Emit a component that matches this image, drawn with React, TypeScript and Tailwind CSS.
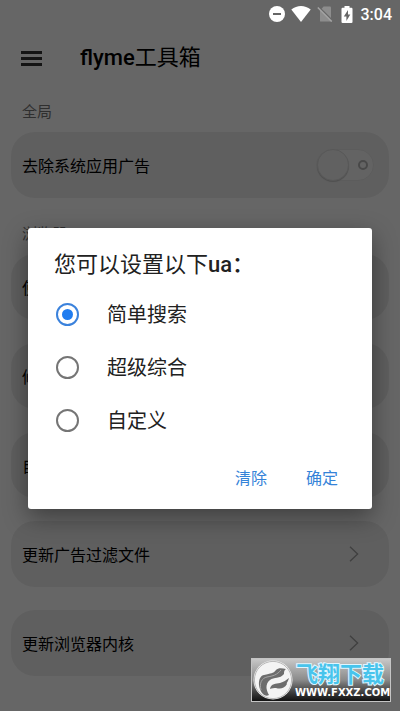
import React, { useState } from "react";

const options = ["简单搜索", "超级综合", "自定义"];

function StatusBar() {
  return (
    <div className="relative z-20 flex h-7 items-center justify-end pr-2 text-white">
      <svg className="size-4" viewBox="0 0 16 16" aria-hidden="true">
        <circle cx="8" cy="8" r="8" fill="#fff" />
        <rect x="4" y="7" width="8" height="2" fill="#666" />
      </svg>
      <svg className="ml-1.5 h-4 w-5" viewBox="0 0 20 16" aria-hidden="true">
        <path d="M10 16 L0.3 3.6 C3.2 1.2 6.5 0 10 0 C13.5 0 16.8 1.2 19.7 3.6 Z" fill="#fff" />
      </svg>
      <svg className="ml-1.5 h-4 w-4" viewBox="0 0 16 16" aria-hidden="true">
        <path d="M3 4.6 L6.6 0.5 H13 Q14 0.5 14 1.5 V15 Q14 15.5 13.4 15.5 H3.6 Q3 15.5 3 15 Z" fill="#8d8d8d" />
        <path d="M2 1.4 L16 15.4" stroke="#666" strokeWidth="2" />
        <path d="M0.8 1.6 L14.8 15.6" stroke="#a4a4a4" strokeWidth="1.4" />
      </svg>
      <svg className="ml-2 h-[17px] w-3" viewBox="0 0 12 17" aria-hidden="true">
        <path d="M3.5 0 H8.5 V1.8 H10.4 Q11.5 1.8 11.5 2.9 V16 Q11.5 17 10.4 17 H1.6 Q0.5 17 0.5 16 V2.9 Q0.5 1.8 1.6 1.8 H3.5 Z" fill="#fff" />
        <path d="M7 4 L2.8 10.4 H5.4 V15 L9.3 8.6 H7 Z" fill="#666" />
      </svg>
      <time className="ml-2 pt-px text-base leading-5 font-medium">3:04</time>
    </div>
  );
}

function Row({ label }: { label: string }) {
  return (
    <button
      type="button"
      className="flex h-[66px] w-full items-center justify-between rounded-3xl bg-[#eee] pr-[30px] pl-[11px] text-left text-base text-black"
    >
      <span className="pt-1">{label}</span>
      <svg className="h-4 w-[10px]" viewBox="0 0 10 16" fill="none" aria-hidden="true">
        <path d="M1 0.7 L8.6 8 L1 15.3" stroke="#a0a0a0" strokeWidth="1.4" />
      </svg>
    </button>
  );
}

function Watermark() {
  return (
    <div className="absolute right-[9px] bottom-[9px] z-40 flex h-11 w-[140px] items-center gap-[2px] border border-[#c4c4c4] bg-linear-to-b from-[#c8c8c8] via-[#8a8a8a] to-[#111] pl-px">
      <svg className="size-10 shrink-0" viewBox="0 0 40 40" aria-hidden="true">
        <circle cx="20" cy="20" r="19.5" fill="#f4f4f4" />
        <circle cx="20" cy="20" r="18.6" fill="none" stroke="#a8a8a8" strokeWidth="0.8" />
        <path d="M10 34 C4 27 5 16 11 15 C18 13 20 14 23 10 C25 8 28 8 33 9 C31 10 31 12 31 14 C27 19 21 17 17 20 C12 24 13 30 16 35 C14 36 12 36 10 34 Z" fill="#6d6d6d" />
        <path d="M17 29 C18 23 23 24 27 23 C31 22 33 20 36 18 C35 22 33 23 34 24 C31 29 27 29 23 28 C21 28 19 28 17 29 Z" fill="#6d6d6d" />
        <path d="M8 30 C6 23 9 18 14 17 C20 16 24 15 28 10" stroke="#a5a5a5" strokeWidth="1" fill="none" />
      </svg>
      <div className="flex flex-col whitespace-nowrap">
        <span className="pl-px text-[22px] leading-[25px] font-bold text-[#48c4ec] [-webkit-text-stroke:2px_#dff6ff] [paint-order:stroke_fill]">飞翔下载</span>
        <span className="font-['DejaVu_Sans',sans-serif] text-[10px] leading-3 font-bold text-white">WWW.FXXZ.COM</span>
      </div>
    </div>
  );
}

export default function App() {
  const [choice, setChoice] = useState(options[0]);
  return (
    <div className="relative min-h-screen overflow-hidden bg-white font-['Roboto','Noto_Sans_CJK_SC',sans-serif] text-black">
      <StatusBar />
      <header className="flex h-[60px] items-center pl-[21px]">
        <button type="button" aria-label="菜单" className="flex w-[21px] flex-col gap-[3px]">
          <span className="h-[3px] bg-[#333]" />
          <span className="h-[3px] bg-[#333]" />
          <span className="h-[3px] bg-[#333]" />
        </button>
        <h1 className="ml-[38px] text-[22px] leading-8">
          <span className="font-medium">flyme</span>工具箱
        </h1>
      </header>
      <main className="px-[11px]">
        <h2 className="flex h-11 items-center pt-1 pl-[11px] text-[15px] text-[#777]">全局</h2>
        <div className="flex h-[66px] items-center justify-between rounded-3xl bg-[#eee] pr-[15px] pl-[11px]">
          <label htmlFor="ads" className="pt-1 text-base">去除系统应用广告</label>
          <input
            id="ads"
            type="checkbox"
            role="switch"
            className="flex h-8 w-[58px] appearance-none items-center justify-between rounded-full border border-[#e6e6e6] bg-[#f8f8f8] pr-[5px] before:size-8 before:rounded-full before:border before:border-[#dcdcdc] before:bg-[#f3f3f3] before:shadow-[0_1px_1px_#c4c4c4] after:size-[10px] after:rounded-full after:border-2 after:border-[#b4b4b4]"
          />
        </div>
        <h2 className="flex h-14 items-center pt-4 pl-[11px] text-[15px] text-[#777]">浏览器</h2>
        <div className="flex flex-col gap-[23px]">
          <Row label="使用" />
          <Row label="修改" />
          <Row label="自定义" />
          <Row label="更新广告过滤文件" />
          <Row label="更新浏览器内核" />
        </div>
      </main>

      <div className="absolute inset-0 z-10 flex items-center bg-black/60 px-7 pt-[26px]">
        <form
          role="dialog"
          aria-labelledby="dialog-title"
          className="w-full rounded-[3px] bg-white px-[26px] pt-[21px] pb-3 shadow-[0_8px_24px_rgba(0,0,0,0.4)]"
          onSubmit={(e) => e.preventDefault()}
        >
          <h2 id="dialog-title" className="text-[22px] leading-8 text-[#212121]">
            您可以设置以下<span className="font-medium">ua：</span>
          </h2>
          <div className="mt-[7px] flex flex-col pl-0.5">
            {options.map((option) => (
              <label key={option} className="flex h-[53px] items-center gap-7 text-[20px] text-[#212121]">
                <input
                  type="radio"
                  name="ua"
                  checked={choice === option}
                  onChange={() => setChoice(option)}
                  className="size-[23px] appearance-none rounded-full border-2 border-[#757575] bg-clip-content p-1 checked:border-[#3b82dc] checked:bg-[#1f7cf0]"
                />
                {option}
              </label>
            ))}
          </div>
          <div className="mt-[14px] flex justify-end gap-[23px]">
            <button type="button" className="h-9 px-2 text-base text-[#3583d8]">清除</button>
            <button type="submit" className="h-9 px-2 text-base text-[#3583d8]">确定</button>
          </div>
        </form>
      </div>
      <Watermark />
    </div>
  );
}
